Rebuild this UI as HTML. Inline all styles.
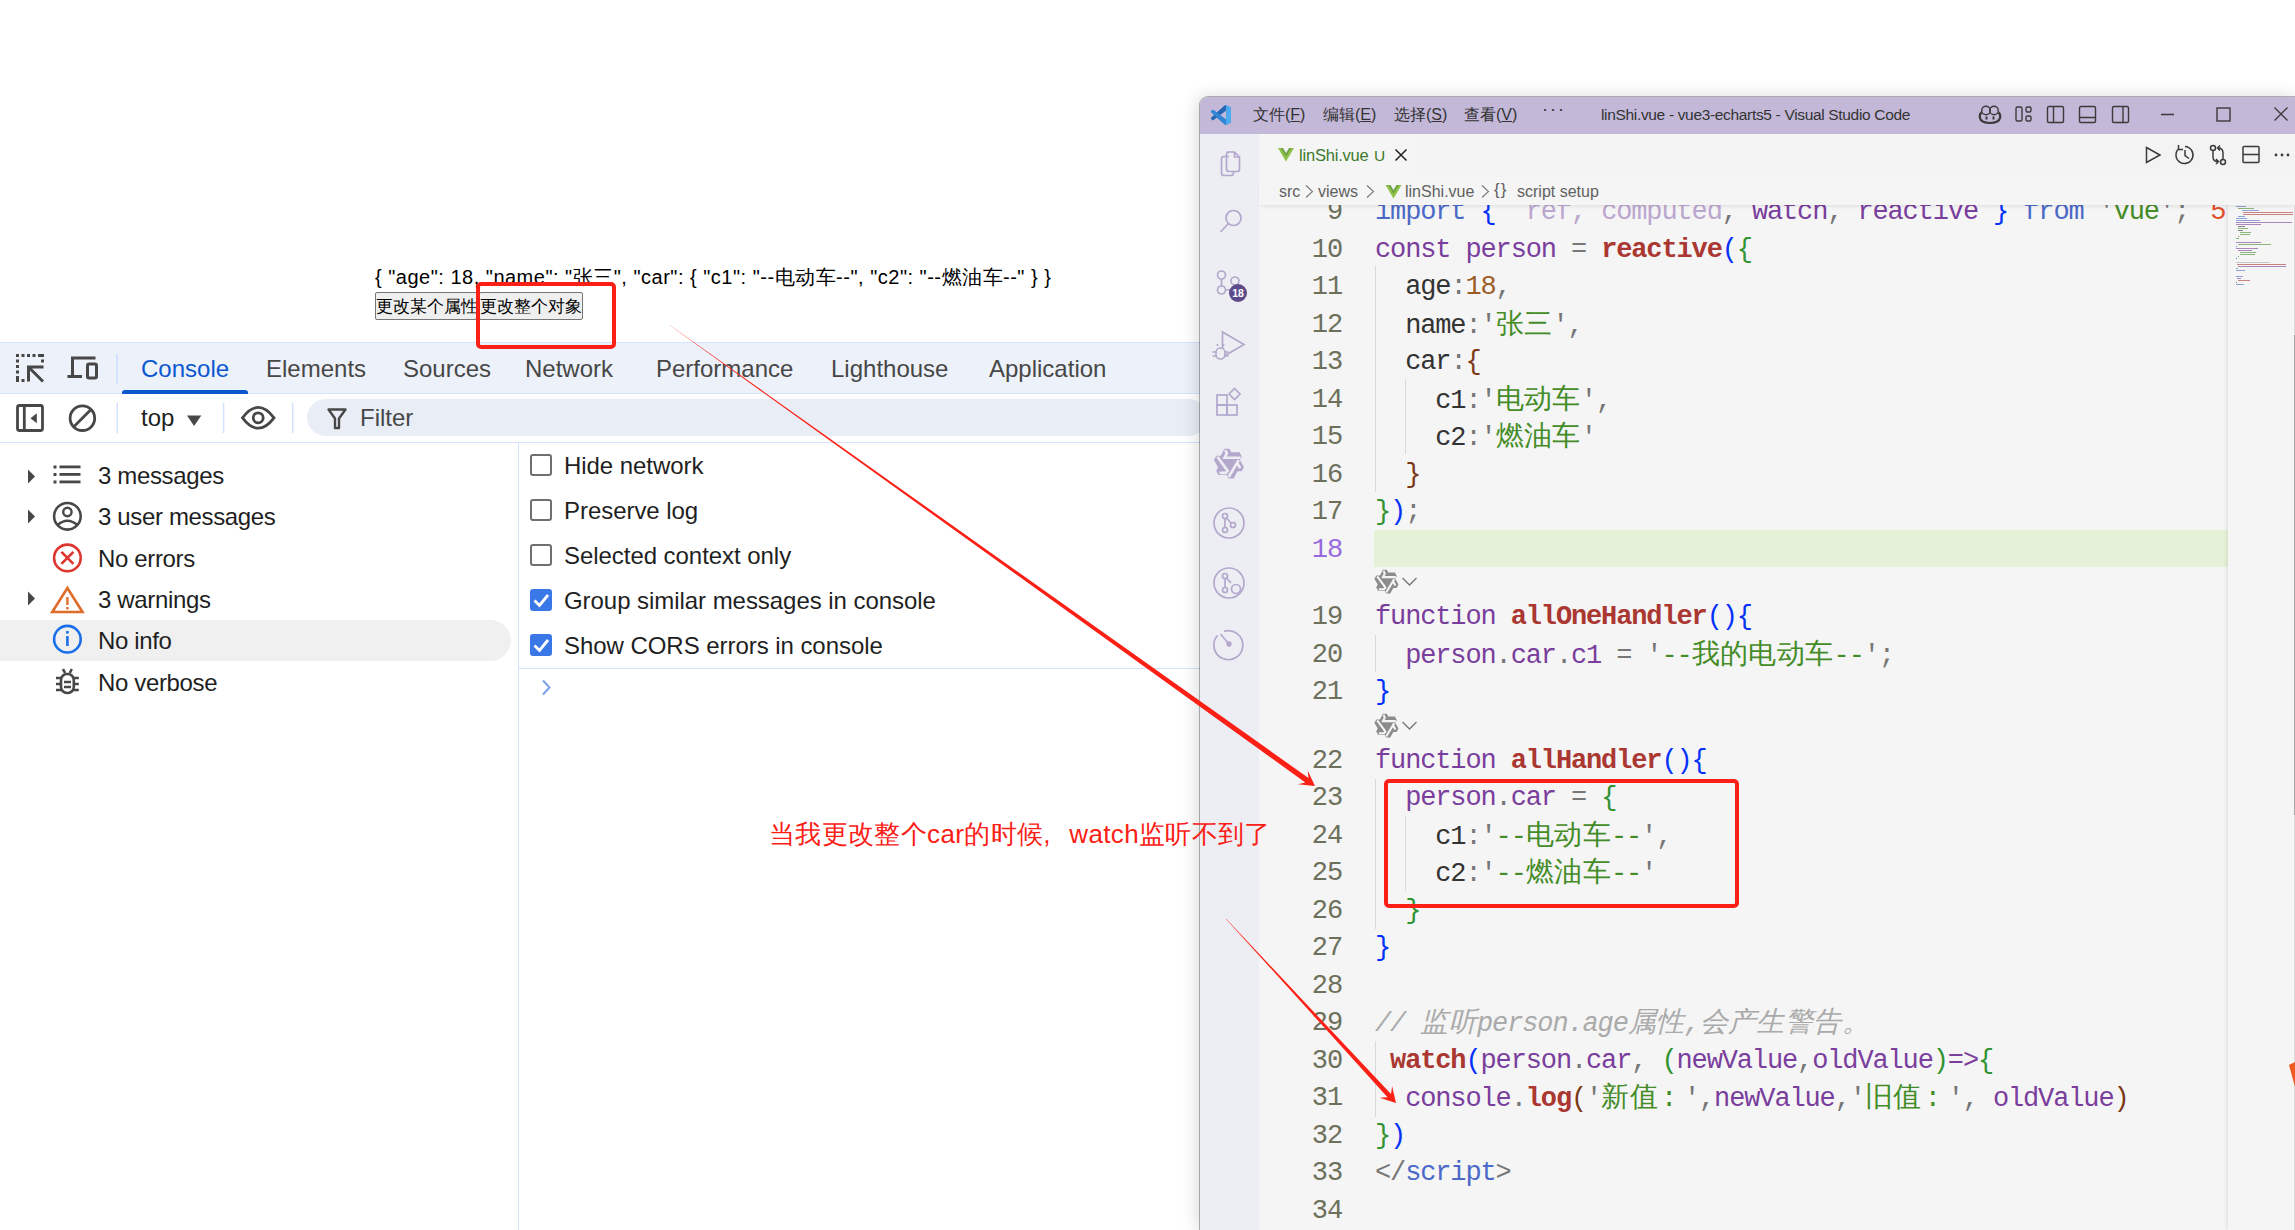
<!DOCTYPE html><html><head><meta charset="utf-8"><style>
*{margin:0;padding:0;box-sizing:border-box;}
html,body{width:2295px;height:1230px;overflow:hidden;background:#fff;font-family:"Liberation Sans",sans-serif;position:relative;}
.a{position:absolute;white-space:nowrap;}
svg{position:absolute;overflow:visible;}
#json{left:375px;top:264px;font-size:20px;color:#000;letter-spacing:0.5px;}
.btn{top:292px;height:28px;border:1px solid #767676;background:#efefef;font-size:16.8px;line-height:28px;padding:0;text-align:center;border-radius:2px;color:#000;}
#tabs{left:0;top:342px;width:1200px;height:52px;background:#edf1f9;border-top:1px solid #d3e3fd;border-bottom:1px solid #d3e3fd;}
.tab{top:12px;font-size:24px;color:#474747;}
#toolbar{left:0;top:394px;width:1200px;height:49px;background:#fff;border-bottom:1px solid #d3e3fd;}
.row{left:0;width:511px;height:41px;font-size:24px;color:#1f1f1f;letter-spacing:-0.35px;}
.row .t{position:absolute;left:98px;top:7px;white-space:nowrap;}
.chk{left:530px;width:22px;height:22px;border:2px solid #6f6f6f;border-radius:3px;}
.chk.on{background:#3b78e7;border-color:#3b78e7;}
.ct{left:564px;font-size:24px;color:#1f1f1f;letter-spacing:-0.05px;}
#vs{left:1200px;top:97px;width:1095px;height:1133px;background:#f5f5f5;border-top-left-radius:8px;box-shadow:0 0 0 1px rgba(0,0,0,0.28),-2px 0 18px rgba(0,0,0,0.16);overflow:hidden;}
#title{left:0;top:0;width:1095px;height:37px;background:#c3b8d8;}
.menu{top:8px;font-size:16px;color:#333;}
#act{left:0;top:37px;width:59px;height:1096px;background:#edeef3;}
.ln{font-family:"Liberation Mono",monospace;font-size:27px;line-height:37.5px;height:37.5px;color:#6d705b;text-align:right;width:60px;left:82px;letter-spacing:-1.13px;}
.cl{white-space:pre;font-family:"Liberation Mono",monospace;font-size:27px;line-height:37.5px;height:37.5px;color:#333;left:175px;letter-spacing:-1.13px;}
.cj{letter-spacing:0.4px;font-size:28px;font-weight:300;}.fc{display:inline-block;width:26px;padding-left:3px;}
.p{color:#7a3e9d}.f{color:#aa3731;font-weight:bold}.b1{color:#0431fa}.b2{color:#319331}.b3{color:#7b3814}
.pu{color:#777}.s{color:#448c27}.n{color:#9c5d27}.cm{color:#aaa;font-style:italic}.kw{color:#4b69c6}.pf{color:#bba6cf}.o{color:#e0502b;margin-left:6px}
.ig{width:1px;background:#d9d9d9;}
.red{border:4px solid #fb2016;border-radius:5px;}
</style></head><body>
<div id="json" class="a">{ "age": 18, "name": "张三", "car": { "c1": "--电动车--", "c2": "--燃油车--" } }</div>
<div class="a btn" style="left:375px;width:102px;">更改某个属性</div>
<div class="a btn" style="left:479px;width:104px;">更改整个对象</div>
<div id="tabs" class="a">
<div class="a tab" style="left:141px;color:#0b57d0">Console</div>
<div class="a tab" style="left:266px;">Elements</div>
<div class="a tab" style="left:403px;">Sources</div>
<div class="a tab" style="left:525px;">Network</div>
<div class="a tab" style="left:656px;">Performance</div>
<div class="a tab" style="left:831px;">Lighthouse</div>
<div class="a tab" style="left:989px;">Application</div>
<div class="a" style="left:122px;top:47px;width:126px;height:4px;background:#0b57d0;border-radius:3px 3px 0 0;"></div>
<div class="a" style="left:116px;top:11px;width:2px;height:30px;background:#d3e3fd;"></div>
</div>
<svg style="left:0;top:0" width="1" height="1">
<g fill="#474747">
<rect x="16" y="354" width="3" height="3"/><rect x="21.5" y="354" width="3" height="3"/><rect x="27" y="354" width="3" height="3"/><rect x="32.5" y="354" width="3" height="3"/><rect x="38" y="354" width="3" height="3"/><rect x="41" y="354" width="3" height="3"/>
<rect x="16" y="359.5" width="3" height="3"/><rect x="16" y="365" width="3" height="3"/><rect x="16" y="370.5" width="3" height="3"/><rect x="16" y="376" width="3" height="3"/><rect x="16" y="379" width="3" height="3"/>
<rect x="21.5" y="379" width="3" height="3"/><rect x="41" y="359.5" width="3" height="3"/>
</g>
<path d="M28.5 381.5 V367 H43.5 M29.5 368 L43 381.5" stroke="#474747" stroke-width="3" fill="none"/>
<path d="M72.5 377 V358 H95.5 M67.5 376.5 H82" stroke="#474747" stroke-width="3" fill="none"/>
<rect x="87.5" y="364" width="9" height="14" rx="1.5" stroke="#474747" stroke-width="3" fill="none"/>
</svg>
<div id="toolbar" class="a"></div>
<svg style="left:0;top:0" width="1" height="1">
<rect x="17.5" y="405.5" width="25" height="25" rx="2" stroke="#474747" stroke-width="2.8" fill="none"/>
<path d="M24.3 405.5 V430.5" stroke="#474747" stroke-width="2.8"/>
<path d="M30.5 418.2 L36.8 413.2 V423.2 Z" fill="#474747"/>
<circle cx="82.4" cy="418.2" r="12.3" stroke="#474747" stroke-width="2.8" fill="none"/>
<path d="M91 409.6 L73.8 426.8" stroke="#474747" stroke-width="2.8"/>
<rect x="116.5" y="403" width="1.5" height="30" fill="#d3e3fd"/>
<rect x="222.8" y="403" width="1.5" height="30" fill="#d3e3fd"/>
<rect x="292" y="403" width="1.5" height="30" fill="#d3e3fd"/>
<path d="M187 415.5 H201.3 L194.1 426 Z" fill="#474747"/>
<path d="M242.5 417.8 Q258.2 397 274 417.8 Q258.2 438.6 242.5 417.8 Z" stroke="#474747" stroke-width="2.8" fill="none"/>
<circle cx="258.2" cy="417.8" r="5" stroke="#474747" stroke-width="2.8" fill="none"/>
</svg>
<div class="a" style="left:141px;top:404px;font-size:24px;color:#1f1f1f;">top</div>
<div class="a" style="left:307px;top:399px;width:900px;height:37px;background:#e9eef6;border-radius:19px;"></div>
<svg style="left:0;top:0" width="1" height="1"><path d="M328.5 409.5 H345.5 L339 418.5 V428 H335 V418.5 Z" stroke="#474747" stroke-width="2.4" fill="none" stroke-linejoin="round"/></svg>
<div class="a" style="left:360px;top:404px;font-size:24px;color:#474747;">Filter</div>
<div class="a" style="left:518px;top:443px;width:1px;height:787px;background:#d3e3fd;"></div>
<div class="a row" style="top:455.0px;"><span class="t">3 messages</span></div>
<div class="a row" style="top:496.3px;"><span class="t">3 user messages</span></div>
<div class="a row" style="top:537.6px;"><span class="t">No errors</span></div>
<div class="a row" style="top:578.9px;"><span class="t">3 warnings</span></div>
<div class="a row" style="top:620.2px;background:#f0f0f0;border-radius:0 21px 21px 0;"><span class="t">No info</span></div>
<div class="a row" style="top:661.5px;"><span class="t">No verbose</span></div>
<svg style="left:0;top:0" width="1" height="1">
<path d="M28 469.5 L35 476.5 L28 483.5 Z" fill="#474747"/>
<path d="M28 509.5 L35 516.5 L28 523.5 Z" fill="#474747"/>
<path d="M28 591.5 L35 598.5 L28 605.5 Z" fill="#474747"/>
<g fill="#474747"><rect x="53.5" y="465.5" width="3" height="3"/><rect x="53.5" y="473" width="3" height="3"/><rect x="53.5" y="480.5" width="3" height="3"/>
<rect x="59.5" y="465.5" width="21" height="2.8"/><rect x="59.5" y="473" width="21" height="2.8"/><rect x="59.5" y="480.5" width="21" height="2.8"/></g>
<circle cx="67.4" cy="516.3" r="13.3" stroke="#474747" stroke-width="2.6" fill="none"/>
<circle cx="67.4" cy="512" r="4.2" stroke="#474747" stroke-width="2.4" fill="none"/>
<path d="M57.5 525 Q67.4 516.5 77.3 525" stroke="#474747" stroke-width="2.4" fill="none"/>
<circle cx="67.4" cy="557.9" r="13.3" stroke="#dc362e" stroke-width="2.6" fill="none"/>
<path d="M61.4 551.9 L73.4 563.9 M73.4 551.9 L61.4 563.9" stroke="#dc362e" stroke-width="2.6"/>
<path d="M67.4 588 L82.5 612 H52.3 Z" stroke="#e06c2a" stroke-width="2.6" fill="none" stroke-linejoin="miter"/>
<path d="M67.4 597 V605" stroke="#e06c2a" stroke-width="2.4"/><rect x="66.2" y="607" width="2.4" height="2.4" fill="#e06c2a"/>
<circle cx="67.4" cy="639.2" r="13.3" stroke="#1a6ee8" stroke-width="2.6" fill="none"/>
<path d="M67.4 636 V646" stroke="#1a6ee8" stroke-width="2.6"/><rect x="66.1" y="631" width="2.6" height="2.6" fill="#1a6ee8"/>
<g stroke="#474747" stroke-width="2.6" fill="none">
<rect x="61" y="674" width="12.8" height="19" rx="6"/>
<path d="M63 669 L65 673 M71.8 669 L69.8 673 M56 678 H61 M56 684 H61 M56 690 H61 M73.8 678 H78.8 M73.8 684 H78.8 M73.8 690 H78.8 M64 682 H71 M64 687 H71"/>
</g>
</svg>
<div class="a chk" style="top:454px;"></div><div class="a ct" style="top:452px;">Hide network</div>
<div class="a chk" style="top:499px;"></div><div class="a ct" style="top:497px;">Preserve log</div>
<div class="a chk" style="top:544px;"></div><div class="a ct" style="top:542px;">Selected context only</div>
<div class="a chk on" style="top:589px;"></div><div class="a ct" style="top:587px;">Group similar messages in console</div>
<svg style="left:0;top:0" width="1" height="1"><path d="M534.5 600.5 L539.5 605.5 L548 595" stroke="#fff" stroke-width="2.8" fill="none"/></svg>
<div class="a chk on" style="top:634px;"></div><div class="a ct" style="top:632px;">Show CORS errors in console</div>
<svg style="left:0;top:0" width="1" height="1"><path d="M534.5 645.5 L539.5 650.5 L548 640" stroke="#fff" stroke-width="2.8" fill="none"/></svg>
<div class="a" style="left:519px;top:667.5px;width:681px;height:1px;background:#d3e3fd;"></div>
<svg style="left:0;top:0" width="1" height="1"><path d="M543 680.5 L549.5 687.5 L543 694.5" stroke="#7c9fe6" stroke-width="2" fill="none"/></svg>
<div id="vs" class="a">
<div id="title" class="a"></div>
<div id="act" class="a"></div>
<div class="a menu" style="left:53px;">文件(<u>F</u>)</div>
<div class="a menu" style="left:123px;">编辑(<u>E</u>)</div>
<div class="a menu" style="left:194px;">选择(<u>S</u>)</div>
<div class="a menu" style="left:264px;">查看(<u>V</u>)</div>
<div class="a menu" style="left:342px;top:2px;font-size:18px;letter-spacing:2px;">···</div>
<div class="a menu" style="left:401px;top:9px;font-size:15.5px;color:#333;letter-spacing:-0.33px;">linShi.vue - vue3-echarts5 - Visual Studio Code</div>
<div class="a ln" style="top:97.20px;">9</div>
<div class="a cl" style="top:97.20px;"><span class="kw">import</span> <span class="b1">{</span>  <span class="pf">ref</span><span class="pf">,</span> <span class="pf">computed</span><span class="pu">,</span> <span class="p">watch</span><span class="pu">,</span> <span class="p">reactive</span> <span class="b1">}</span> <span class="kw">from</span> <span class="pu">'</span><span class="s">vue</span><span class="pu">'</span><span class="pu">;</span> <span class="o">5</span></div>
<div class="a ln" style="top:134.70px;">10</div>
<div class="a cl" style="top:134.70px;"><span class="p">const</span> <span class="p">person</span> <span class="pu">=</span> <span class="f">reactive</span><span class="b1">(</span><span class="b2">{</span></div>
<div class="a ln" style="top:172.20px;">11</div>
<div class="a cl" style="top:172.20px;">  age<span class="pu">:</span><span class="n">18</span><span class="pu">,</span></div>
<div class="a ln" style="top:209.70px;">12</div>
<div class="a cl" style="top:209.70px;">  name<span class="pu">:</span><span class="pu">'</span><span class="s"><span class="cj">张三</span></span><span class="pu">'</span><span class="pu">,</span></div>
<div class="a ln" style="top:247.20px;">13</div>
<div class="a cl" style="top:247.20px;">  car<span class="pu">:</span><span class="b3">{</span></div>
<div class="a ln" style="top:284.70px;">14</div>
<div class="a cl" style="top:284.70px;">    c1<span class="pu">:</span><span class="pu">'</span><span class="s"><span class="cj">电动车</span></span><span class="pu">'</span><span class="pu">,</span></div>
<div class="a ln" style="top:322.20px;">15</div>
<div class="a cl" style="top:322.20px;">    c2<span class="pu">:</span><span class="pu">'</span><span class="s"><span class="cj">燃油车</span></span><span class="pu">'</span></div>
<div class="a ln" style="top:359.70px;">16</div>
<div class="a cl" style="top:359.70px;">  <span class="b3">}</span></div>
<div class="a ln" style="top:397.20px;">17</div>
<div class="a cl" style="top:397.20px;"><span class="b2">}</span><span class="b1">)</span><span class="pu">;</span></div>
<div class="a ln" style="top:434.70px;color:#9769dc;">18</div>
<div class="a" style="left:174px;top:433.2px;width:1053px;height:36.4px;background:#e6f2d8;"></div>
<div class="a cl" style="top:434.70px;"></div>
<div class="a ln" style="top:502.20px;">19</div>
<div class="a cl" style="top:502.20px;"><span class="p">function</span> <span class="f">allOneHandler</span><span class="b1">(){</span></div>
<div class="a ln" style="top:539.70px;">20</div>
<div class="a cl" style="top:539.70px;">  <span class="p">person</span><span class="pu">.</span><span class="p">car</span><span class="pu">.</span><span class="p">c1</span> <span class="pu">=</span> <span class="pu">'</span><span class="s">--<span class="cj">我的电动车</span>--</span><span class="pu">'</span><span class="pu">;</span></div>
<div class="a ln" style="top:577.20px;">21</div>
<div class="a cl" style="top:577.20px;"><span class="b1">}</span></div>
<div class="a ln" style="top:645.70px;">22</div>
<div class="a cl" style="top:645.70px;"><span class="p">function</span> <span class="f">allHandler</span><span class="b1">(){</span></div>
<div class="a ln" style="top:683.20px;">23</div>
<div class="a cl" style="top:683.20px;">  <span class="p">person</span><span class="pu">.</span><span class="p">car</span> <span class="pu">=</span> <span class="b2">{</span></div>
<div class="a ln" style="top:720.70px;">24</div>
<div class="a cl" style="top:720.70px;">    c1<span class="pu">:</span><span class="pu">'</span><span class="s">--<span class="cj">电动车</span>--</span><span class="pu">'</span><span class="pu">,</span></div>
<div class="a ln" style="top:758.20px;">25</div>
<div class="a cl" style="top:758.20px;">    c2<span class="pu">:</span><span class="pu">'</span><span class="s">--<span class="cj">燃油车</span>--</span><span class="pu">'</span></div>
<div class="a ln" style="top:795.70px;">26</div>
<div class="a cl" style="top:795.70px;">  <span class="b2">}</span></div>
<div class="a ln" style="top:833.20px;">27</div>
<div class="a cl" style="top:833.20px;"><span class="b1">}</span></div>
<div class="a ln" style="top:870.70px;">28</div>
<div class="a cl" style="top:870.70px;"></div>
<div class="a ln" style="top:908.20px;">29</div>
<div class="a cl" style="top:908.20px;"><span class="cm">// <span class="cj">监听</span>person.age<span class="cj">属性</span>,<span class="cj">会产生警告。</span></span></div>
<div class="a ln" style="top:945.70px;">30</div>
<div class="a cl" style="top:945.70px;"> <span class="f">watch</span><span class="b1">(</span><span class="p">person</span><span class="pu">.</span><span class="p">car</span><span class="pu">,</span> <span class="b2">(</span><span class="p">newValue</span><span class="pu">,</span><span class="p">oldValue</span><span class="b2">)</span><span class="p">=&gt;</span><span class="b2">{</span></div>
<div class="a ln" style="top:983.20px;">31</div>
<div class="a cl" style="top:983.20px;">  <span class="p">console</span><span class="pu">.</span><span class="f">log</span><span class="b3">(</span><span class="pu">'</span><span class="s"><span class="cj">新值</span><span class="fc">:</span><span class="cj"></span></span><span class="pu">'</span><span class="pu">,</span><span class="p">newValue</span><span class="pu">,</span><span class="pu">'</span><span class="s"><span class="cj">旧值</span><span class="fc">:</span><span class="cj"></span></span><span class="pu">'</span><span class="pu">,</span> <span class="p">oldValue</span><span class="b3">)</span></div>
<div class="a ln" style="top:1020.70px;">32</div>
<div class="a cl" style="top:1020.70px;"><span class="b2">}</span><span class="b1">)</span></div>
<div class="a ln" style="top:1058.20px;">33</div>
<div class="a cl" style="top:1058.20px;"><span class="pu">&lt;/</span><span class="kw">script</span><span class="pu">&gt;</span></div>
<div class="a ln" style="top:1095.70px;">34</div>
<div class="a cl" style="top:1095.70px;"></div>
<svg style="left:0;top:0" width="1" height="1"><g transform="translate(11,8) scale(0.2)">
<path d="M96.46 10.8 75.86.87a6.23 6.23 0 0 0-7.1 1.2L29.35 38.04 12.19 25.01a4.16 4.16 0 0 0-5.32.24L1.36 30.26a4.16 4.16 0 0 0 0 6.16L16.24 50 1.36 63.58a4.16 4.16 0 0 0 0 6.16l5.51 5.01a4.16 4.16 0 0 0 5.32.24l17.16-13.03 39.41 35.96a6.23 6.23 0 0 0 7.1 1.2l20.6-9.92a6.25 6.25 0 0 0 3.54-5.63V16.43a6.25 6.25 0 0 0-3.54-5.63zM75.02 72.7 45.11 50l29.91-22.7z" fill="#2f7fd0"/>
<path d="M75.86.87 96.46 10.8a6.25 6.25 0 0 1 3.54 5.63V83.57a6.25 6.25 0 0 1-3.54 5.63L75.86 99.13a6.23 6.23 0 0 1-7.1-1.2L75.02 72.7V27.3L68.76 2.07a6.23 6.23 0 0 1 7.1-1.2z" fill="#4dabef"/>
<path d="M1.36 63.58 L16.24 50 L29.35 61.96 L12.19 74.99a4.16 4.16 0 0 1-5.32-.24L1.36 69.74a4.16 4.16 0 0 1 0-6.16z M29.35 38.04 L68.76 2.07 L75.5 1 L75.02 27.3 L45.11 50 Z" fill="#2568b0"/><path d="M1.36 30.26a4.16 4.16 0 0 0 0 6.16 L68.76 97.93 L75.5 99 L75.02 72.7 L12.19 25.01a4.16 4.16 0 0 0-5.32.24Z" fill="#3385d6"/>
</g></svg>
<svg style="left:0;top:0" width="1" height="1">
<g stroke="#3b3b3b" stroke-width="1.4" fill="none">
<circle cx="786" cy="13.5" r="4.3"/><circle cx="794" cy="13.5" r="4.3"/><path d="M781.5 15.5 Q779.5 17 779.8 20.5 Q781 26 790 26 Q799 26 800.2 20.5 Q800.5 17 798.5 15.5" stroke-width="2.2"/><path d="M786.5 19.5 V22.5 M793.5 19.5 V22.5" stroke-width="2"/>
<rect x="816" y="10" width="6" height="14" rx="1.5"/><rect x="826" y="10" width="5" height="5" rx="1.5"/><rect x="826" y="19" width="5" height="5" rx="1.5"/>
<rect x="847.5" y="9.5" width="16" height="16" rx="1.5"/><path d="M853.5 9.5 V25.5"/>
<rect x="879.5" y="9.5" width="16" height="16" rx="1.5"/><path d="M879.5 20.5 H895.5"/>
<rect x="912.5" y="9.5" width="16" height="16" rx="1.5"/><path d="M923 9.5 V25.5"/>
<path d="M961 17.5 H974"/>
<rect x="1017" y="11" width="13" height="13"/>
<path d="M1074.5 10.5 L1087.5 23.5 M1087.5 10.5 L1074.5 23.5"/>
</g>

</svg>
<div class="a" style="left:59px;top:37px;width:1036px;height:43px;background:#f3f3f3;"></div>
<div class="a" style="left:59px;top:37px;width:157px;height:43px;background:#f5f5f5;"></div>
<div class="a" style="left:99px;top:49px;font-size:16.5px;color:#3c7a2a;letter-spacing:-0.2px;">linShi.vue</div>
<div class="a" style="left:174px;top:50px;font-size:15.5px;color:#3c7a2a;">U</div>
<svg style="left:0;top:0" width="1" height="1">
<path d="M195.5 52.5 L206.5 63.5 M206.5 52.5 L195.5 63.5" stroke="#222" stroke-width="1.5"/>
<path d="M78 51 H82.5 L86 57 L89.5 51 H94 L86 64.5 Z" fill="#8dc149"/>
<path d="M81 51 H83.2 L86 55.8 L88.8 51 H91 L86 59.5 Z" fill="#3f7c2c" opacity="0.5"/>
</svg>
<svg style="left:0;top:0" width="1" height="1">
<g stroke="#3b3b3b" stroke-width="1.5" fill="none">
<path d="M946.5 50.5 L960 58 L946.5 65.5 Z"/>
<path d="M979 51.5 A8.5 8.5 0 1 0 985 49.5 M978.5 48 V52.5 H983 M985 53 V58.5 L989 61.5"/>
<circle cx="1013" cy="51" r="2.5"/><circle cx="1023" cy="65" r="2.5"/>
<path d="M1013 53.5 V60 Q1013 64.5 1018 64.5 M1016 62 L1018.5 64.5 L1016 67 M1023 62.5 V56 Q1023 51 1018 51 M1020 48.5 L1017.5 51 L1020 53.5"/>
<rect x="1043" y="49.5" width="16" height="16" rx="1"/><path d="M1043 57.5 H1059"/>
</g>
<g fill="#3b3b3b"><circle cx="1076" cy="58" r="1.4"/><circle cx="1082" cy="58" r="1.4"/><circle cx="1088" cy="58" r="1.4"/></g>
</svg>
<div class="a" style="left:59px;top:80px;width:1036px;height:28px;background:#f5f5f5;box-shadow:0 3px 4px -2px rgba(0,0,0,0.10);z-index:3;"></div>
<div class="a" style="left:79px;top:85.5px;font-size:16px;color:#616161;z-index:4;">src</div>
<div class="a" style="left:118px;top:85.5px;font-size:16px;color:#616161;z-index:4;">views</div>
<div class="a" style="left:205px;top:85.5px;font-size:16px;color:#616161;z-index:4;">linShi.vue</div>
<div class="a" style="left:317px;top:85.5px;font-size:16px;color:#616161;z-index:4;">script setup</div>
<svg style="left:0;top:0;z-index:4" width="1" height="1">
<g stroke="#7a7a7a" stroke-width="1.1" fill="none">
<path d="M106 88.5 L112.5 94.5 L106 100.5 M167 88.5 L173.5 94.5 L167 100.5 M282 88.5 L288.5 94.5 L282 100.5"/>
</g>
<path d="M185.5 88 H190 L193.5 94 L197 88 H201.5 L193.5 101.5 Z" fill="#8dc149"/>
<path d="M188.5 88 H190.7 L193.5 92.8 L196.3 88 H198.5 L193.5 96.5 Z" fill="#3f7c2c" opacity="0.5"/>
</svg>
<div class="a" style="left:294px;top:83px;font-size:17px;color:#616161;z-index:4;letter-spacing:1px;">{}</div>
<svg style="left:0;top:0" width="1" height="1">
<g stroke="#b3a7cc" stroke-width="1.7" fill="none">
<g transform="translate(-9,0)"><path d="M38 59.5 H33 Q30.5 59.5 30.5 62 V76 Q30.5 78.5 33 78.5 H40 Q42.5 78.5 42.5 76 V74.5"/>
<path d="M35.5 55 H43.5 L48.5 60 V72 Q48.5 74.5 46 74.5 H38 Q35.5 74.5 35.5 72 V57.5 Q35.5 55 38 55 Z M43.5 55 V60 H48.5"/></g>
<circle cx="33.5" cy="121" r="7.5"/><path d="M28.5 126.5 L20.5 135"/>
<circle cx="21.5" cy="178" r="4"/><circle cx="21.5" cy="193" r="4"/><circle cx="35" cy="184" r="4"/><path d="M21.5 182 V189 M35 188 Q35 193 25.5 193"/>
<path d="M22.5 235 L44 247.5 L22.5 260 Z" />
<rect x="17" y="308" width="10" height="10"/><rect x="17" y="298" width="10" height="10"/><rect x="27" y="308" width="10" height="10"/><path d="M29 297 L34.5 291.5 L40 297 L34.5 302.5 Z"/>
<circle cx="29" cy="426" r="15"/><circle cx="25" cy="419" r="2.5"/><circle cx="25" cy="433" r="2.5"/><circle cx="33" cy="428" r="2.5"/><path d="M25 421.5 V430.5 M26.5 421 L31.5 426.5"/>
<circle cx="29" cy="486" r="15"/><circle cx="25" cy="479" r="2.5"/><circle cx="25" cy="493" r="2.5"/><path d="M25 481.5 V490.5 M26.5 481 L31 486"/><circle cx="36" cy="492" r="4.5" fill="#edeef3"/>
<path d="M24 534.3 A14.5 14.5 0 1 1 17.5 538.5"/><path d="M20.5 537 L28.5 546.5"/><circle cx="29" cy="547" r="1.8" fill="#b3a7cc"/>
</g>
<g fill="#5d4a8a"><circle cx="38" cy="196" r="9"/></g>
</svg>
<div class="a" style="left:29px;top:190px;width:18px;text-align:center;font-size:10.5px;font-weight:bold;color:#fff;">18</div>
<svg style="left:0;top:0" width="1" height="1"><g stroke="#b3a7cc" stroke-width="1.6" fill="#edeef3">
<rect x="16" y="251" width="9" height="11" rx="4.5"/><path d="M12.5 255 H16 M12.5 259 H16 M25 255 H28.5 M25 259 H28.5 M18 249 L17 247 M23 249 L24 247"/></g></svg>
<svg style="left:0;top:0" width="1" height="1"><g transform="translate(5,342.6) scale(1.0)">
<path d="M19.3 9.1 L24.4 9.1 L26.2 12.6 L34.6 12.6 L36.8 16.9 L35 20.3 L39 27.6 L36.6 31.7 L32.5 31.7 L28.7 38.8 L23.6 38.8 L21.5 35.4 L13.4 35.4 L11.2 31.3 L13 27.6 L8.9 20.3 L11.4 16.1 L15.9 16.1 Z" fill="#b3a7cc"/>
<g stroke="#edeef3" stroke-width="2.6" fill="none" stroke-linejoin="miter">
<path d="M20.2 10.4 L21.9 13.6 L19.6 18.2 L35.6 18.2"/>
<path d="M12.4 17.2 L22.6 31.2 L21 33.3 L14.5 33.3"/>
<path d="M33.8 20.6 L23.6 37.4"/>
<path d="M31.8 22.6 L35.2 28.6"/>
</g></g></svg>
<svg style="left:0;top:0" width="1" height="1"><g transform="translate(167.28,465.538) scale(0.8)">
<path d="M19.3 9.1 L24.4 9.1 L26.2 12.6 L34.6 12.6 L36.8 16.9 L35 20.3 L39 27.6 L36.6 31.7 L32.5 31.7 L28.7 38.8 L23.6 38.8 L21.5 35.4 L13.4 35.4 L11.2 31.3 L13 27.6 L8.9 20.3 L11.4 16.1 L15.9 16.1 Z" fill="#8c8c8c"/>
<g stroke="#f5f5f5" stroke-width="2.6" fill="none" stroke-linejoin="miter">
<path d="M20.2 10.4 L21.9 13.6 L19.6 18.2 L35.6 18.2"/>
<path d="M12.4 17.2 L22.6 31.2 L21 33.3 L14.5 33.3"/>
<path d="M33.8 20.6 L23.6 37.4"/>
<path d="M31.8 22.6 L35.2 28.6"/>
</g></g></svg>
<svg style="left:0;top:0" width="1" height="1"><path d="M202.5 481 L209.5 488 L216.5 481" stroke="#777" stroke-width="1.4" fill="none"/></svg>
<svg style="left:0;top:0" width="1" height="1"><g transform="translate(167.28,609.538) scale(0.8)">
<path d="M19.3 9.1 L24.4 9.1 L26.2 12.6 L34.6 12.6 L36.8 16.9 L35 20.3 L39 27.6 L36.6 31.7 L32.5 31.7 L28.7 38.8 L23.6 38.8 L21.5 35.4 L13.4 35.4 L11.2 31.3 L13 27.6 L8.9 20.3 L11.4 16.1 L15.9 16.1 Z" fill="#8c8c8c"/>
<g stroke="#f5f5f5" stroke-width="2.6" fill="none" stroke-linejoin="miter">
<path d="M20.2 10.4 L21.9 13.6 L19.6 18.2 L35.6 18.2"/>
<path d="M12.4 17.2 L22.6 31.2 L21 33.3 L14.5 33.3"/>
<path d="M33.8 20.6 L23.6 37.4"/>
<path d="M31.8 22.6 L35.2 28.6"/>
</g></g></svg>
<svg style="left:0;top:0" width="1" height="1"><path d="M202.5 625 L209.5 632 L216.5 625" stroke="#777" stroke-width="1.4" fill="none"/></svg>
<div class="a ig" style="left:175px;top:169px;height:226px;"></div>
<div class="a ig" style="left:205px;top:282px;height:75px;"></div>
<div class="a ig" style="left:175px;top:538px;height:37px;"></div>
<div class="a ig" style="left:175px;top:682px;height:150px;"></div>
<div class="a ig" style="left:205px;top:719px;height:75px;"></div>
<div class="a ig" style="left:175px;top:944px;height:76px;"></div>
<div class="a" style="left:1028px;top:108px;width:67px;height:1025px;background:#f5f5f5;box-shadow:-2px 0 3px rgba(0,0,0,0.07);"></div>
<div class="a" style="left:1036px;top:108.6px;width:10px;height:1.5px;background:#4b69c6;opacity:0.6;"></div>
<div class="a" style="left:1038px;top:110.6px;width:16px;height:1.5px;background:#448c27;opacity:0.6;"></div>
<div class="a" style="left:1042px;top:112.6px;width:17px;height:1.5px;background:#4b69c6;opacity:0.6;"></div>
<div class="a" style="left:1043px;top:114.6px;width:50px;height:1.5px;background:#aa3731;opacity:0.6;"></div>
<div class="a" style="left:1043px;top:116.6px;width:50px;height:1.5px;background:#aa3731;opacity:0.6;"></div>
<div class="a" style="left:1038px;top:118.6px;width:7px;height:1.5px;background:#4b69c6;opacity:0.6;"></div>
<div class="a" style="left:1036px;top:120.6px;width:11px;height:1.5px;background:#4b69c6;opacity:0.6;"></div>
<div class="a" style="left:1036px;top:122.6px;width:24px;height:1.5px;background:#4b69c6;opacity:0.6;"></div>
<div class="a" style="left:1036px;top:124.6px;width:56px;height:1.5px;background:#7a3e9d;opacity:0.6;"></div>
<div class="a" style="left:1036px;top:126.6px;width:25px;height:1.5px;background:#7a3e9d;opacity:0.6;"></div>
<div class="a" style="left:1038px;top:128.6px;width:7px;height:1.5px;background:#333;opacity:0.6;"></div>
<div class="a" style="left:1038px;top:130.6px;width:10px;height:1.5px;background:#448c27;opacity:0.6;"></div>
<div class="a" style="left:1038px;top:132.6px;width:5px;height:1.5px;background:#333;opacity:0.6;"></div>
<div class="a" style="left:1040px;top:134.6px;width:11px;height:1.5px;background:#448c27;opacity:0.6;"></div>
<div class="a" style="left:1040px;top:136.6px;width:10px;height:1.5px;background:#448c27;opacity:0.6;"></div>
<div class="a" style="left:1038px;top:138.6px;width:1px;height:1.5px;background:#7b3814;opacity:0.6;"></div>
<div class="a" style="left:1036px;top:140.6px;width:3px;height:1.5px;background:#319331;opacity:0.6;"></div>
<div class="a" style="left:1036px;top:144.6px;width:25px;height:1.5px;background:#7a3e9d;opacity:0.6;"></div>
<div class="a" style="left:1038px;top:146.6px;width:33px;height:1.5px;background:#448c27;opacity:0.6;"></div>
<div class="a" style="left:1036px;top:148.6px;width:1px;height:1.5px;background:#0431fa;opacity:0.6;"></div>
<div class="a" style="left:1036px;top:150.6px;width:22px;height:1.5px;background:#7a3e9d;opacity:0.6;"></div>
<div class="a" style="left:1038px;top:152.6px;width:14px;height:1.5px;background:#7a3e9d;opacity:0.6;"></div>
<div class="a" style="left:1040px;top:154.6px;width:16px;height:1.5px;background:#448c27;opacity:0.6;"></div>
<div class="a" style="left:1040px;top:156.6px;width:15px;height:1.5px;background:#448c27;opacity:0.6;"></div>
<div class="a" style="left:1038px;top:158.6px;width:1px;height:1.5px;background:#319331;opacity:0.6;"></div>
<div class="a" style="left:1036px;top:160.6px;width:1px;height:1.5px;background:#0431fa;opacity:0.6;"></div>
<div class="a" style="left:1036px;top:164.6px;width:34px;height:1.5px;background:#aaa;opacity:0.6;"></div>
<div class="a" style="left:1037px;top:166.6px;width:49px;height:1.5px;background:#aa3731;opacity:0.6;"></div>
<div class="a" style="left:1038px;top:168.6px;width:48px;height:1.5px;background:#7a3e9d;opacity:0.6;"></div>
<div class="a" style="left:1036px;top:170.6px;width:2px;height:1.5px;background:#319331;opacity:0.6;"></div>
<div class="a" style="left:1036px;top:172.6px;width:9px;height:1.5px;background:#4b69c6;opacity:0.6;"></div>
<div class="a" style="left:1036px;top:178.6px;width:7px;height:1.5px;background:#4b69c6;opacity:0.6;"></div>
<div class="a" style="left:1037px;top:180.6px;width:4px;height:1.5px;background:#7a3e9d;opacity:0.6;"></div>
<div class="a" style="left:1038px;top:182.6px;width:12px;height:1.5px;background:#aa3731;opacity:0.6;"></div>
<div class="a" style="left:1036px;top:184.6px;width:1px;height:1.5px;background:#333;opacity:0.6;"></div>
<div class="a" style="left:1036px;top:186.6px;width:8px;height:1.5px;background:#4b69c6;opacity:0.6;"></div>
<div class="a" style="left:1094px;top:108px;width:1px;height:1025px;background:#dcdcdc;"></div><div class="a" style="left:1093.5px;top:238px;width:1.5px;height:480px;background:#a8a8a8;"></div>
<svg style="left:0;top:0" width="1" height="1"><path d="M1089 968 L1095 965 V990 Z" fill="#f05a22"/></svg>
</div>
<div class="a" style="left:769px;top:817px;font-size:26px;color:#fb2016;letter-spacing:0.35px;">当我更改整个car的时候<span style="display:inline-block;width:26px;">,</span>watch监听不到了</div>
<div class="a red" style="left:476px;top:282px;width:140px;height:67px;"></div>
<div class="a red" style="left:1384px;top:779px;width:355px;height:129px;"></div>
<svg style="left:0;top:0" width="1" height="1"><polygon points="669.4,325.1 1305.3,782.4 1297.9,784.2 1315.0,786.0 1307.7,770.4 1308.5,778.0 669.6,324.9" fill="#fb2016"/></svg>
<svg style="left:0;top:0" width="1" height="1"><polygon points="1225.9,918.9 1387.5,1097.3 1379.6,1097.7 1396.0,1103.0 1392.1,1086.2 1391.0,1094.0 1226.1,918.7" fill="#fb2016"/></svg>
</body></html>
